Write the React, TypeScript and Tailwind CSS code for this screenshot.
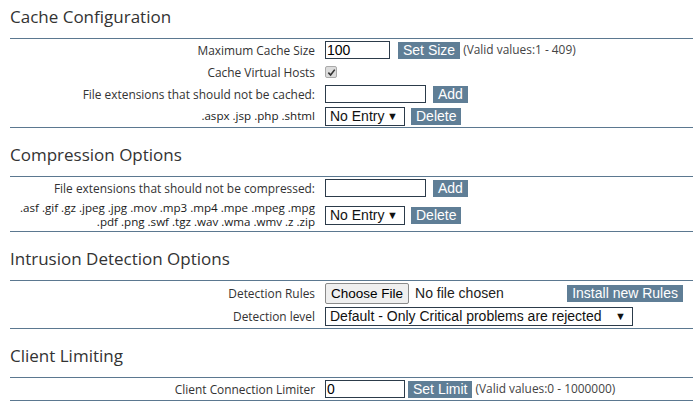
import React from "react";

const sans = "font-['Open_Sans','Noto_Sans',sans-serif]";
const arial = "font-['Liberation_Sans',Arial,sans-serif]";

const Btn = ({ children, className = "" }: { children: React.ReactNode; className?: string }) => (
  <button
    className={`${arial} h-[17px] bg-[#5f7e96] px-[5px] text-[14px] leading-[17px] text-white ${className}`}
  >
    {children}
  </button>
);

const TextBox = ({ w, value = "" }: { w: string; value?: string }) => (
  <input
    readOnly
    value={value}
    className={`${arial} ${w} h-[18px] border border-[#2c3b4a] bg-white px-[1px] text-[14px] leading-[16px] text-black outline-none`}
  />
);

const Select = ({ w, text }: { w: string; text: string }) => (
  <div
    className={`${arial} ${w} flex h-[19px] items-center justify-between border border-[#2c3b4a] bg-white pl-[4px] pr-[6px] text-[14px] text-[#111]`}
  >
    <span>{text}</span>
    <span className="text-[11px]">▼</span>
  </div>
);

const Row = ({
  label,
  h = "h-[22px]",
  dark = false,
  children,
}: {
  label: React.ReactNode;
  h?: string;
  dark?: boolean;
  children: React.ReactNode;
}) => (
  <div className={`flex ${h} items-center`}>
    <div
      className={`w-[306px] shrink-0 whitespace-nowrap pr-[1px] text-right ${
        dark ? "text-[11.6px] leading-[14px] font-medium text-[#1a1a1a]" : "text-[11.9px] leading-[13px] text-[#333]"
      }`}
    >
      {label}
    </div>
    <div className="flex flex-1 items-center pl-[9px]">{children}</div>
  </div>
);

const Section = ({
  title,
  first = false,
  children,
}: {
  title: string;
  first?: boolean;
  children: React.ReactNode;
}) => (
  <section className={first ? "" : "mt-[10px]"}>
    <h2 className="pt-[6px] pb-[10px] text-[17px] leading-[22px] text-[#333]">{title}</h2>
    <div className="border-y border-[#5b7890]">{children}</div>
  </section>
);

const Hint = ({ children }: { children: React.ReactNode }) => (
  <span className="ml-[3px] text-[11.9px] text-[#444]">{children}</span>
);

export default function App() {
  return (
    <div className={`${sans} w-[693px] bg-white pl-[10px]`}>
      <Section title="Cache Configuration" first>
        <Row label="Maximum Cache Size">
          <TextBox w="w-[65px]" value="100" />
          <Btn className="ml-[8px]">Set Size</Btn>
          <Hint>(Valid values:1 - 409)</Hint>
        </Row>
        <Row label="Cache Virtual Hosts">
          <span className="flex h-[12px] w-[12px] items-center justify-center rounded-[2px] border border-[#aaa] bg-[#dcdcdc]">
            <svg viewBox="0 0 10 10" className="h-[9px] w-[9px]">
              <path d="M1.5 5.2 L4 7.8 L8.6 1.8" fill="none" stroke="#333" strokeWidth="1.8" />
            </svg>
          </span>
        </Row>
        <Row label="File extensions that should not be cached:">
          <TextBox w="w-[101px]" />
          <Btn className="ml-[7px]">Add</Btn>
        </Row>
        <Row label=".aspx .jsp .php .shtml" dark>
          <Select w="w-[80px]" text="No Entry" />
          <Btn className="ml-[6px]">Delete</Btn>
        </Row>
      </Section>

      <Section title="Compression Options">
        <Row label="File extensions that should not be compressed:">
          <TextBox w="w-[101px]" />
          <Btn className="ml-[7px]">Add</Btn>
        </Row>
        <Row
          h="h-[32px]"
          dark
          label={
            <>
              .asf .gif .gz .jpeg .jpg .mov .mp3 .mp4 .mpe .mpeg .mpg
              <br />
              .pdf .png .swf .tgz .wav .wma .wmv .z .zip
            </>
          }
        >
          <Select w="w-[80px]" text="No Entry" />
          <Btn className="ml-[6px]">Delete</Btn>
        </Row>
      </Section>

      <Section title="Intrusion Detection Options">
        <Row label="Detection Rules" h="h-[24px]">
          <button
            className={`${arial} h-[21px] rounded-[2px] border border-[#8a8a8a] bg-[#efefef] px-[5px] text-[13.5px] leading-[19px] text-black`}
          >
            Choose File
          </button>
          <span className={`${arial} ml-[6px] text-[14px] text-[#222]`}>No file chosen</span>
          <Btn className="mr-[10px] ml-auto text-[13.5px]">Install new Rules</Btn>
        </Row>
        <Row label="Detection level" h="h-[23px]">
          <Select w="w-[308px]" text="Default - Only Critical problems are rejected" />
        </Row>
      </Section>

      <Section title="Client Limiting">
        <Row label="Client Connection Limiter">
          <TextBox w="w-[80px]" value="0" />
          <Btn className="ml-[3px]">Set Limit</Btn>
          <Hint>(Valid values:0 - 1000000)</Hint>
        </Row>
      </Section>
    </div>
  );
}
